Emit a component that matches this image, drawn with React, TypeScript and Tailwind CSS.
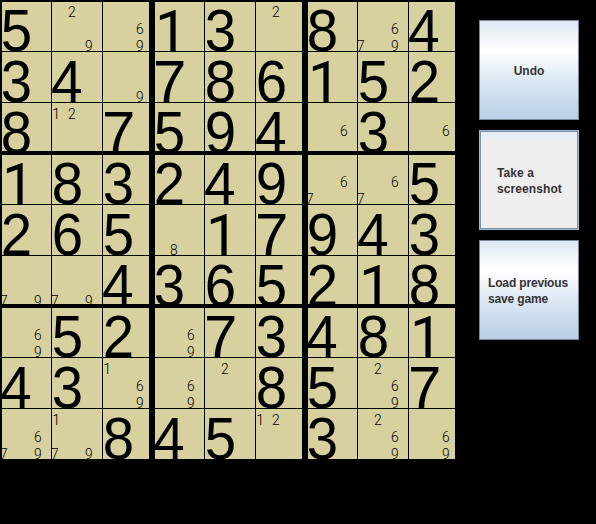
import React from "react";
import clsx from "clsx";

// One string per cell: a single "=n" is a solved digit, otherwise pencil marks.
const BOARD: string[][] = [
  ["=5", "29", "69", "=1", "=3", "2", "=8", "679", "=4"],
  ["=3", "=4", "9", "=7", "=8", "=6", "=1", "=5", "=2"],
  ["=8", "12", "=7", "=5", "=9", "=4", "6", "=3", "6"],
  ["=1", "=8", "=3", "=2", "=4", "=9", "67", "67", "=5"],
  ["=2", "=6", "=5", "8", "=1", "=7", "=9", "=4", "=3"],
  ["79", "79", "=4", "=3", "=6", "=5", "=2", "=1", "=8"],
  ["69", "=5", "=2", "69", "=7", "=3", "=4", "=8", "=1"],
  ["=4", "=3", "169", "69", "2", "=8", "=5", "269", "=7"],
  ["679", "179", "=8", "=4", "=5", "12", "=3", "269", "69"],
];

const MARKS = ["1", "2", "3", "4", "5", "6", "7", "8", "9"];

// The 1 uses a face without a foot serif; the round digits are slightly condensed.
function digitClass(digit: string) {
  if (digit === "1") return "pl-0.5 font-['Roboto',sans-serif] text-[58px]";
  if (digit === "7") return "text-[60px]";
  if (digit === "4") return "origin-left scale-x-[0.95] text-[60px]";
  return "origin-left scale-x-[0.94] pl-[0.7px] text-[60px]";
}

function Cell({ value, row, col }: { value: string; row: number; col: number }) {
  const boxLeft = col % 3 === 0;
  const boxTop = row % 3 === 0;
  return (
    <div
      className={clsx(
        "h-[51px] w-[51px] overflow-hidden border-black bg-[#d6d19f]",
        boxLeft ? "border-l-2" : "border-l",
        boxTop ? "border-t-2" : "border-t",
        col % 3 === 2 && "border-r-4",
        (row === 2 || row === 5) && "border-b-2",
      )}
    >
      <div className={clsx("h-[51px] w-[51px]", boxLeft ? "-ml-0.5" : "-ml-px", boxTop ? "-mt-0.5" : "-mt-px")}>
        {value[0] === "=" ? (
          <span className={clsx("block leading-[62px]", digitClass(value[1]))}>{value[1]}</span>
        ) : (
          <div className="grid grid-cols-[17px_17px_17px] grid-rows-[17px_17px_17px] font-['Roboto',sans-serif] text-[15px] leading-[24px] font-light">
            {MARKS.map((m) => (
              <span key={m} className={clsx("origin-left", m === "1" ? "pl-px" : "scale-x-[0.92]")}>
                {value.includes(m) ? m : ""}
              </span>
            ))}
          </div>
        )}
      </div>
    </div>
  );
}

function SideButton({ lines, pressed }: { lines: string[]; pressed?: boolean }) {
  return (
    <button
      className={clsx(
        "flex h-[100px] w-[100px] items-center justify-center border pt-0.5 text-left text-[12px] leading-4 font-bold whitespace-nowrap text-[#333333]",
        lines[0].length > 10 && "pr-0.5 tracking-[-0.16px]",
        pressed
          ? "border-[#a3b8cc] bg-[linear-gradient(to_bottom,#e6eff8_0px,#e6eff8_5px,#eeeeee_7px)] pl-px tracking-[0.08px] shadow-[inset_0_0_0_1px_#7a93ad]"
          : "border-[#7a8a99] bg-[linear-gradient(to_bottom,#dde8f3_0%,#ffffff_30%,#dde8f3_60%,#b8cfe5_100%)]",
      )}
    >
      <span>
        {lines.map((l) => (
          <span key={l} className="block">
            {l}
          </span>
        ))}
      </span>
    </button>
  );
}

export default function App() {
  return (
    <div className="flex h-[524px] w-[596px] overflow-hidden bg-black font-['Liberation_Sans',Arial,sans-serif] text-black">
      <div className="grid h-[459px] w-[459px] shrink-0 grid-cols-[repeat(9,51px)] grid-rows-[repeat(9,51px)]">
        {BOARD.map((cells, row) => cells.map((v, col) => <Cell key={`${row}-${col}`} value={v} row={row} col={col} />))}
      </div>
      <div className="flex flex-col gap-2.5 pt-5 pl-5">
        <SideButton lines={["Undo"]} />
        <SideButton lines={["Take a", "screenshot"]} pressed />
        <SideButton lines={["Load previous", "save game"]} />
      </div>
    </div>
  );
}
